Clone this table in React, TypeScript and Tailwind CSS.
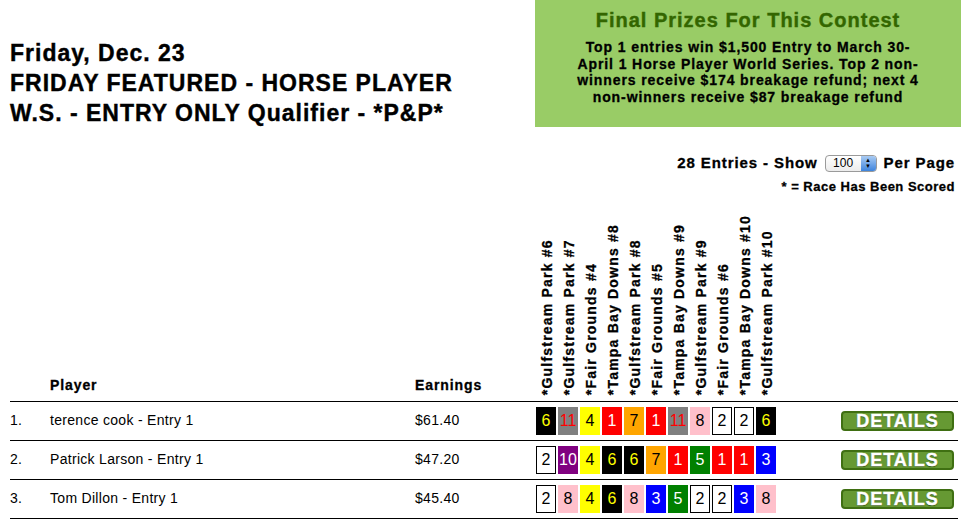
import React from 'react';

const races = [
  '*Gulfstream Park #6',
  '*Gulfstream Park #7',
  '*Fair Grounds #4',
  '*Tampa Bay Downs #8',
  '*Gulfstream Park #8',
  '*Fair Grounds #5',
  '*Tampa Bay Downs #9',
  '*Gulfstream Park #9',
  '*Fair Grounds #6',
  '*Tampa Bay Downs #10',
  '*Gulfstream Park #10',
];

// saddle cloth colours by post position
const cloth: Record<number, string> = {
  1: 'bg-[#ff0000] text-white',
  2: 'bg-white text-black border border-black',
  3: 'bg-[#0000ff] text-white',
  4: 'bg-[#ffff00] text-black',
  5: 'bg-[#008000] text-white',
  6: 'bg-black text-[#ffff00]',
  7: 'bg-[#ffa500] text-black',
  8: 'bg-[#ffc0cb] text-black',
  10: 'bg-[#800080] text-white',
  11: 'bg-[#808080] text-[#ff0000]',
};

const rows = [
  { rank: '1.', name: 'terence cook - Entry 1', earn: '$61.40', picks: [6, 11, 4, 1, 7, 1, 11, 8, 2, 2, 6] },
  { rank: '2.', name: 'Patrick Larson - Entry 1', earn: '$47.20', picks: [2, 10, 4, 6, 6, 7, 1, 5, 1, 1, 3] },
  { rank: '3.', name: 'Tom Dillon - Entry 1', earn: '$45.40', picks: [2, 8, 4, 6, 8, 3, 5, 2, 2, 3, 8] },
];

export default function App() {
  return (
    <div className="w-[961px] h-[519px] overflow-hidden bg-white text-black font-['Liberation_Sans',Arial,sans-serif]">
      <div className="flex">
        <div className="w-[535px] pl-[10px] pt-[38px]">
          <h1 className="text-[23px] leading-[30px] font-bold tracking-[1px] [-webkit-text-stroke:0.4px_black]">
            Friday, Dec. 23
            <br />
            FRIDAY FEATURED - HORSE PLAYER
            <br />
            W.S. - ENTRY ONLY Qualifier - *P&amp;P*
          </h1>
        </div>
        <div className="w-[426px] h-[127px] bg-[#99cc66] pt-[7px] text-center">
          <div className="text-[20px] leading-[26px] font-bold tracking-[1px] text-[#336600] [-webkit-text-stroke:0.4px_#336600]">
            Final Prizes For This Contest
          </div>
          <div className="text-[14px] leading-[16.5px] font-bold tracking-[0.9px] mt-[6px] [-webkit-text-stroke:0.3px_black]">
            Top 1 entries win $1,500 Entry to March 30-
            <br />
            April 1 Horse Player World Series. Top 2 non-
            <br />
            winners receive $174 breakage refund; next 4
            <br />
            non-winners receive $87 breakage refund
          </div>
        </div>
      </div>

      <div className="flex flex-col items-end pr-[6px] pt-[26px]">
        <div className="flex items-center gap-[7px] text-[15px] font-bold tracking-[0.9px] h-[18px] [-webkit-text-stroke:0.3px_black]">
          <span>28 Entries - Show</span>
          <div className="flex items-center h-[17px] w-[52px] border border-[#9a9a9a] rounded-[4px] overflow-hidden bg-gradient-to-b from-white to-[#ececec] text-[12px] font-normal tracking-normal [-webkit-text-stroke:0]">
            <span className="flex-1 text-center">100</span>
            <span className="w-[15px] h-full flex flex-col items-center justify-center bg-gradient-to-b from-[#a9cbf3] to-[#3d84dc] text-[6px] leading-[6px] text-black">
              <span>▲</span>
              <span>▼</span>
            </span>
          </div>
          <span>Per Page</span>
        </div>
        <div className="text-[13px] font-bold tracking-[0.5px] mt-[5px] [-webkit-text-stroke:0.3px_black]">
          * = Race Has Been Scored
        </div>
      </div>

      <div className="ml-[10px] mr-[3px] mt-[13px]">
        <div className="flex items-end border-b border-black h-[192px] [-webkit-text-stroke:0.3px_black]">
          <div className="w-[40px]" />
          <div className="w-[365px] text-[14px] font-bold tracking-[0.9px] pb-[5px]">Player</div>
          <div className="w-[121px] text-[14px] font-bold tracking-[0.9px] pb-[5px]">Earnings</div>
          <div className="flex pb-[5px]">
            {races.map((r) => (
              <div key={r} className="w-[22px] flex justify-center">
                <span className="[writing-mode:vertical-rl] rotate-180 whitespace-nowrap text-[14px] leading-[16px] font-bold tracking-[1.2px]">
                  {r}
                </span>
              </div>
            ))}
          </div>
        </div>

        {rows.map((row) => (
          <div key={row.rank} className="flex items-center border-b border-black h-[39px] text-[14px] tracking-[0.3px]">
            <div className="w-[40px]">{row.rank}</div>
            <div className="w-[365px]">{row.name}</div>
            <div className="w-[121px]">{row.earn}</div>
            <div className="flex gap-[2px] tracking-normal">
              {row.picks.map((p, i) => (
                <div
                  key={i}
                  className={`w-[20px] h-[28px] flex items-center justify-center text-[16px] ${cloth[p]}`}
                >
                  {p}
                </div>
              ))}
            </div>
            <div className="flex-1 flex justify-end pr-[4px]">
              <button className="w-[113px] h-[20px] rounded-[4px] border-2 border-[#3f6f12] bg-[#669933] text-white text-[18px] leading-[16px] font-bold tracking-[1px] [text-shadow:0_1px_1px_#2d4d0d] [-webkit-text-stroke:0.4px_white]">
                DETAILS
              </button>
            </div>
          </div>
        ))}
      </div>
    </div>
  );
}
